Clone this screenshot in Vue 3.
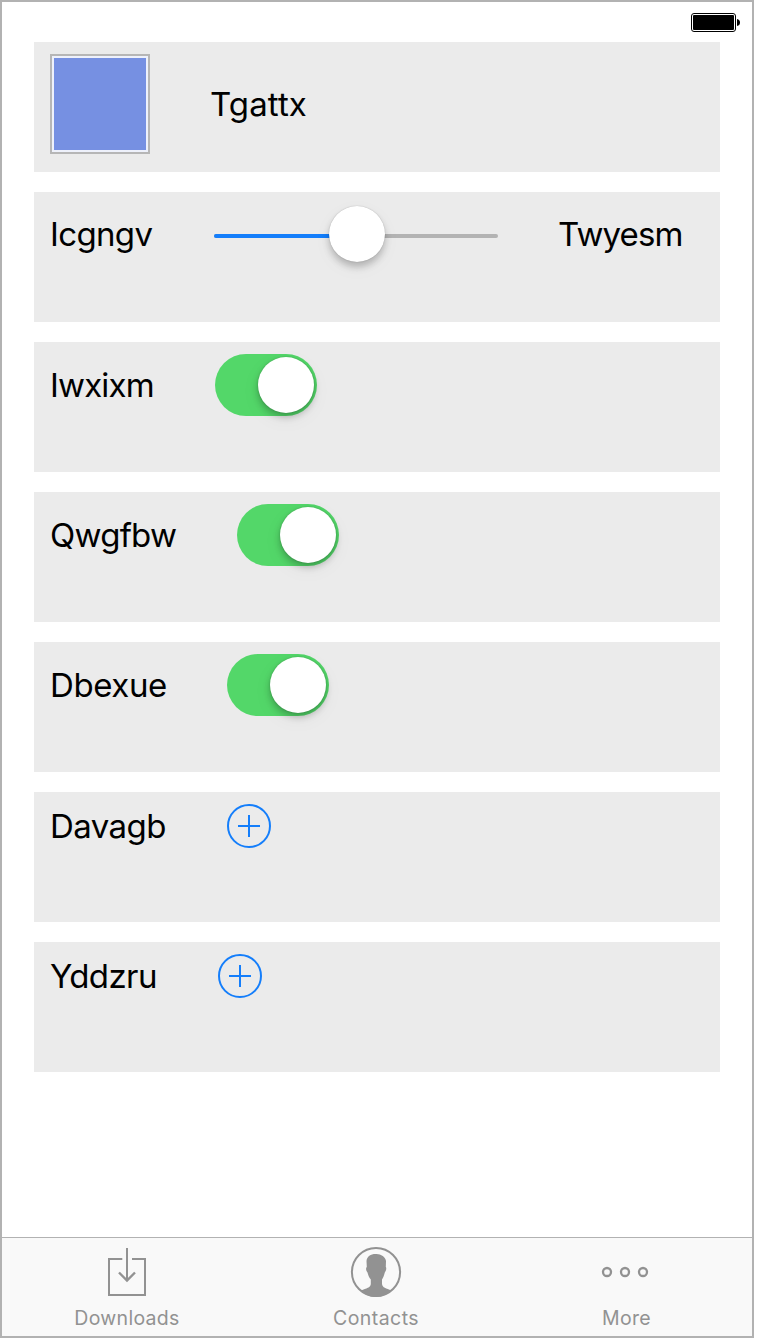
<script setup>
const rows = [
  { label: 'Icgngv', width: 104, spacing: -0.65, kind: 'slider', value: 50, end: 'Twyesm' },
  { label: 'Iwxixm', width: 105, spacing: -0.85, kind: 'switch' },
  { label: 'Qwgfbw', width: 127, spacing: -0.75, kind: 'switch' },
  { label: 'Dbexue', width: 117, spacing: -0.4, kind: 'switch' },
  { label: 'Davagb', width: 117, spacing: -0.55, kind: 'add' },
  { label: 'Yddzru', width: 108, spacing: -0.6, kind: 'add' },
]
</script>

<template>
  <div class="screen">
    <header class="status">
      <svg width="50" height="20" viewBox="0 0 50 20">
        <rect x="0.5" y="0.5" width="44" height="18" rx="2.5" fill="#fff" stroke="#000" />
        <rect x="2" y="2" width="41" height="15" rx="1" fill="#000" />
        <path d="M46 6 Q49 6.5 49 9.5 Q49 12.500 46 13Z" fill="#000" />
      </svg>
    </header>

    <main class="list">
      <section class="row">
        <div class="swatch"><div class="swatch-fill"></div></div>
        <span class="label title">Tgattx</span>
      </section>

      <section v-for="r in rows" :key="r.label" class="row">
        <span class="label" :style="{ width: r.width + 'px', letterSpacing: r.spacing + 'px' }">{{ r.label }}</span>

        <div v-if="r.kind === 'slider'" class="slider">
          <div class="track"><div class="fill" :style="{ width: r.value + '%' }"></div></div>
          <div class="thumb" :style="{ left: r.value + '%' }"></div>
        </div>
        <div v-else-if="r.kind === 'switch'" class="switch"><div class="knob"></div></div>
        <svg v-else class="add" width="44" height="44" viewBox="0 0 44 44" fill="none" stroke="#147efb" stroke-width="2">
          <circle cx="22" cy="22" r="21" />
          <path d="M11 22H33M22 11V33" />
        </svg>

        <span v-if="r.end" class="label end">{{ r.end }}</span>
      </section>
    </main>

    <nav class="tabs">
      <div class="tab">
        <svg width="52" height="52" viewBox="0 0 52 52" fill="none" stroke="#929292" stroke-width="2">
          <path d="M22.300 13H9V49H45V13H32" />
          <path d="M27 2V35" />
          <path d="M19 26.500L27 34.500L35 26.500" stroke-width="2.400" />
        </svg>
        <span class="caption downloads">Downloads</span>
      </div>
      <div class="tab">
        <svg width="52" height="52" viewBox="0 0 52 52">
          <circle cx="26" cy="26" r="24.100" fill="none" stroke="#929292" stroke-width="2" />
          <path fill="#929292" d="M16.500 15C17 10 21 7.700 26.500 8C31 8 35.500 11 36 15L35.800 21C36.800 22 36 25 34.800 26.500C34 30 33 32 32 33.500V38C32.500 42 36 42 41.500 44.500C37 48.800 32 51 26 51C20 51 14.500 48.500 11 44.500C16.500 42 20.500 42 20.800 38V33.500C19.500 32 18.300 30 17.500 26.500C16 25 15.500 22 16.800 21Z" />
        </svg>
        <span class="caption contacts">Contacts</span>
      </div>
      <div class="tab">
        <svg width="52" height="52" viewBox="0 0 52 52" fill="none" stroke="#929292" stroke-width="2.300">
          <circle cx="7" cy="26" r="4" />
          <circle cx="25" cy="26" r="4" />
          <circle cx="43" cy="26" r="4" />
        </svg>
        <span class="caption more">More</span>
      </div>
    </nav>
  </div>
</template>

<style>
body {
  background: #fff;
}
</style>

<style scoped>
.screen {
  box-sizing: border-box;
  width: 754px;
  height: 1338px;
  border: 2px solid #b2b2b2;
  display: flex;
  flex-direction: column;
  background: #fff;
  font-family: Inter, "Liberation Sans", sans-serif;
}
.status {
  height: 40px;
  box-sizing: border-box;
  padding: 11px 11px 0 0;
  display: flex;
  justify-content: flex-end;
  align-items: flex-start;
}
.list {
  flex: 1;
  padding: 0 32px;
  display: flex;
  flex-direction: column;
  gap: 20px;
}
.row {
  box-sizing: border-box;
  height: 130px;
  padding: 12px 16px;
  background: #ebebeb;
  display: grid;
  grid-auto-flow: column;
  justify-content: start;
  align-content: start;
  align-items: center;
  column-gap: 60px;
}
.label {
  font-size: 33px;
  line-height: 40px;
  color: #000;
  white-space: nowrap;
}
.title {
  letter-spacing: 0.1px;
}
.end {
  letter-spacing: -0.85px;
}
.swatch {
  box-sizing: border-box;
  width: 100px;
  height: 100px;
  border: 2px solid #b6b6b6;
  padding: 2px;
  background: #eef1fb;
}
.swatch-fill {
  height: 100%;
  background: #7690e2;
}
.slider {
  position: relative;
  width: 284px;
  height: 60px;
  display: flex;
  align-items: center;
}
.track {
  width: 100%;
  height: 4px;
  margin-top: 4px;
  border-radius: 2px;
  background: #b3b3b3;
  overflow: hidden;
}
.fill {
  height: 100%;
  background: #147efb;
}
.thumb {
  position: absolute;
  top: 2px;
  width: 56px;
  height: 56px;
  margin-left: -27px;
  border-radius: 50%;
  background: #fff;
  box-shadow: 0 0 1px rgba(0, 0, 0, 0.3), 0 5px 7px rgba(0, 0, 0, 0.22), 0 6px 20px rgba(0, 0, 0, 0.04);
}
.switch {
  box-sizing: border-box;
  width: 102px;
  height: 62px;
  padding: 3px;
  border-radius: 31px;
  background: #53d769;
  display: flex;
  justify-content: flex-end;
}
.knob {
  width: 56px;
  height: 56px;
  border-radius: 50%;
  background: #fff;
  box-shadow: 0 0 2px rgba(0, 0, 0, 0.2), 0 4px 7px rgba(0, 0, 0, 0.24), 0 6px 20px rgba(0, 0, 0, 0.05);
}
.add {
  display: block;
}
.tabs {
  box-sizing: border-box;
  height: 99px;
  border-top: 1px solid #b2b2b2;
  background: #f9f9f9;
  display: grid;
  grid-template-columns: 250px 250px 250px;
}
.tab {
  display: flex;
  flex-direction: column;
  align-items: center;
  padding: 8px 2px 0 0;
}
.caption {
  margin-top: 8px;
  font-size: 19.5px;
  line-height: 24px;
  letter-spacing: 0.3px;
  color: #929292;
}
.downloads {
  padding-left: 2px;
}
.contacts {
  letter-spacing: 0.45px;
}
.more {
  padding-left: 1px;
}
</style>
